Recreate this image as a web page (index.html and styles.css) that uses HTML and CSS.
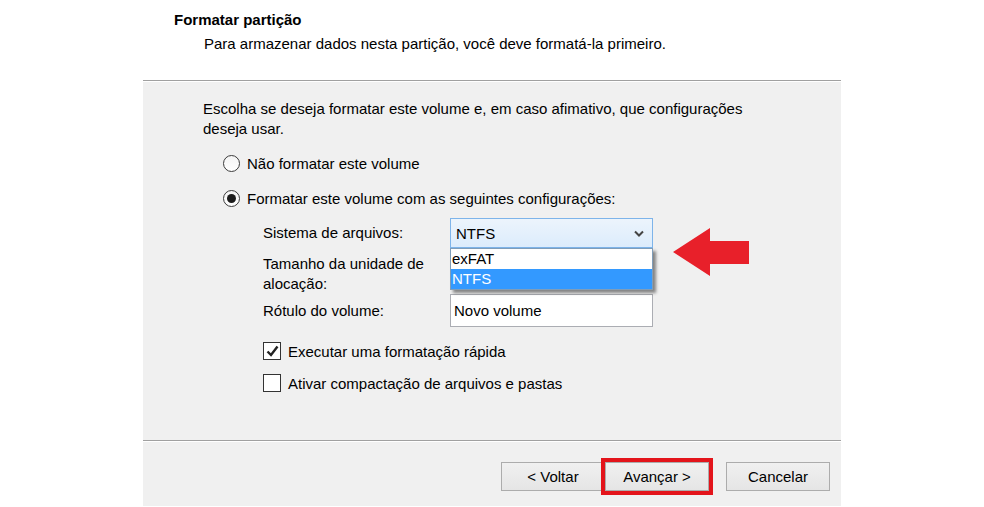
FILE: index.html
```html
<!DOCTYPE html>
<html lang="pt-BR">
<head>
    <meta charset="UTF-8">
    <title>Formatar partição</title>
    <link rel="stylesheet" href="styles.css">
</head>
<body>
    <div class="wizard">
        <header class="head">
            <h1>Formatar partição</h1>
            <p>Para armazenar dados nesta partição, você deve formatá-la primeiro.</p>
        </header>

        <main class="content">
            <p class="intro">Escolha se deseja formatar este volume e, em caso afimativo, que configurações<br>deseja usar.</p>

            <div class="opt"><span class="radio"></span>Não formatar este volume</div>
            <div class="opt second"><span class="radio on"></span>Formatar este volume com as seguintes configurações:</div>

            <div class="form">
                <span class="lbl">Sistema de arquivos:</span>
                <div class="combo">
                    <span>NTFS</span>
                    <svg class="chev" width="10" height="7" viewBox="0 0 10 7"><path d="M1 1.5 L5 5.5 L9 1.5" fill="none" stroke="#444" stroke-width="2"/></svg>
                    <ul class="list">
                        <li>exFAT</li>
                        <li class="sel">NTFS</li>
                    </ul>
                </div>

                <span class="lbl low">Tamanho da unidade de<br>alocação:</span>
                <div></div>

                <span class="lbl">Rótulo do volume:</span>
                <div class="field">Novo volume</div>
            </div>

            <div class="chk first"><span class="box"><svg width="13" height="12" viewBox="0 0 13 12"><path d="M1.5 6.5 L5 10 L11.5 1.5" fill="none" stroke="#222" stroke-width="2.4"/></svg></span>Executar uma formatação rápida</div>
            <div class="chk"><span class="box"></span>Ativar compactação de arquivos e pastas</div>

            <svg class="arrow" width="76" height="48" viewBox="0 0 76 48">
                <polygon points="0,24 37,0 37,13 76,13 76,36 37,36 37,48" fill="#e8202a"/>
            </svg>
        </main>

        <footer class="foot">
            <button class="btn">&lt; Voltar</button>
            <button class="btn mark">Avançar &gt;</button>
            <button class="btn cancel">Cancelar</button>
        </footer>
    </div>
</body>
</html>
```

FILE: styles.css
```css
body {
    margin: 0;
    background-color: #fff;
    font-family: "Liberation Sans", Arial, sans-serif;
    font-size: 15px;
    color: #000;
}
.wizard {
    width: 698px;
    margin-left: 143px;
}
.head {
    height: 81px;
    box-sizing: border-box;
    padding: 11px 0 0 31px;
    background-color: #fff;
    border-bottom: 1px solid #a0a0a0;
}
.head h1 {
    margin: 0;
    font-size: 15px;
    line-height: 18px;
    font-weight: bold;
}
.head p {
    margin: 6px 0 0 30px;
    line-height: 18px;
}
.content {
    position: relative;
    display: block;
    height: 360px;
    box-sizing: border-box;
    padding: 17px 0 0 60px;
    background-color: #f0f0f0;
    border-top: 1px solid #fff;
    border-bottom: 1px solid #a0a0a0;
}
.intro {
    margin: 0;
    line-height: 20px;
}
.opt {
    display: flex;
    align-items: center;
    height: 20px;
    margin: 14px 0 0 20px;
}
.opt.second {
    margin-top: 15px;
}
.radio {
    position: relative;
    width: 15px;
    height: 15px;
    margin-right: 7px;
    border: 1px solid #3c3c3c;
    border-radius: 50%;
    background: linear-gradient(#f4f4f4, #ffffff);
}
.radio.on::after {
    content: "";
    position: absolute;
    left: 3px;
    top: 3px;
    width: 9px;
    height: 9px;
    border-radius: 50%;
    background-color: #1c1c1c;
}
.form {
    display: grid;
    grid-template-columns: 187px 203px;
    grid-template-rows: 30px 46px 33px;
    align-items: center;
    margin: 10px 0 0 60px;
}
.lbl {
    line-height: 20px;
}
.lbl.low {
    align-self: end;
}
.combo {
    position: relative;
    display: flex;
    align-items: center;
    justify-content: space-between;
    height: 30px;
    box-sizing: border-box;
    padding: 0 8px 0 5px;
    border: 1px solid #7eb4ea;
    background: linear-gradient(#ecf4fc, #dcecfc);
}
.list {
    position: absolute;
    left: -1px;
    top: 29px;
    width: 203px;
    box-sizing: border-box;
    margin: 0;
    padding: 0;
    list-style: none;
    border: 1px solid #7f9db9;
    background-color: #fff;
    box-shadow: 3px 3px 3px rgba(0, 0, 0, 0.45);
}
.list li {
    height: 20px;
    line-height: 20px;
    padding-left: 1px;
}
.list li.sel {
    background-color: #3399ff;
    color: #fff;
}
.field {
    display: flex;
    align-items: center;
    height: 33px;
    box-sizing: border-box;
    padding-left: 3px;
    border: 1px solid #abadb3;
    background-color: #fff;
}
.chk {
    display: flex;
    align-items: center;
    height: 20px;
    margin: 12px 0 0 60px;
}
.chk.first {
    margin-top: 14px;
}
.box {
    display: flex;
    align-items: center;
    justify-content: center;
    width: 16px;
    height: 16px;
    margin-right: 7px;
    border: 1px solid #333;
    background-color: #fff;
}
.arrow {
    position: absolute;
    left: 530px;
    top: 146px;
}
.foot {
    display: flex;
    justify-content: flex-end;
    align-items: flex-start;
    height: 65px;
    box-sizing: border-box;
    padding: 20px 11px 0 0;
    background-color: #f0f0f0;
    border-top: 1px solid #fff;
}
.btn {
    width: 104px;
    height: 29px;
    font-family: inherit;
    font-size: 15px;
    color: #000;
    border: 1px solid #acacac;
    background: linear-gradient(#f0f0f0, #e5e5e5);
}
.btn.mark {
    outline: 4px solid #e3141b;
    outline-offset: 0;
}
.btn.cancel {
    margin-left: 17px;
}
```
